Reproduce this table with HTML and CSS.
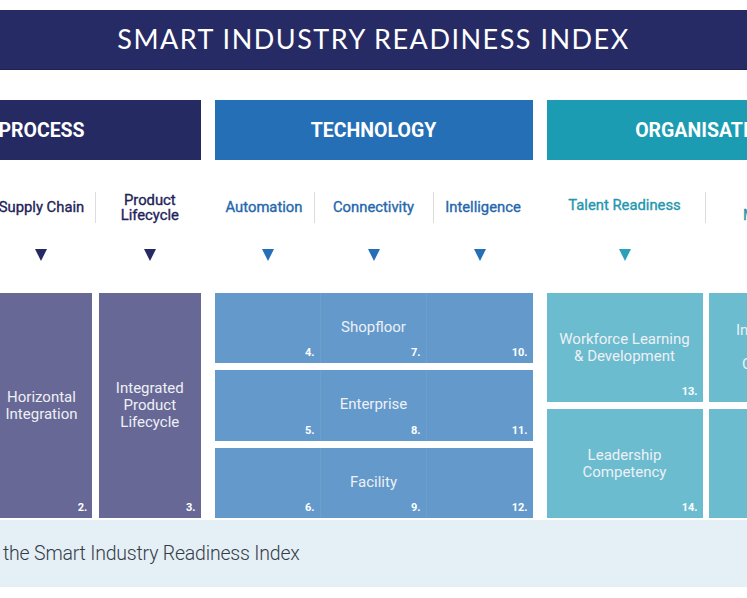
FILE: index.html
```html
<!DOCTYPE html>
<html lang="en">
<head>
<meta charset="utf-8">
<title>Smart Industry Readiness Index</title>
<link rel="stylesheet" href="styles.css">
</head>
<body>
<div class="stage">
  <div class="figure">
    <div class="title">SMART INDUSTRY READINESS INDEX</div>
    <div class="columns">
      <!-- PROCESS -->
      <section class="col process">
        <div class="head">PROCESS</div>
        <div class="labels labels-3">
          <div class="lab">Operations</div><div class="sep"></div>
          <div class="lab">Supply Chain</div><div class="sep"></div>
          <div class="lab">Product<br>Lifecycle</div>
        </div>
        <div class="arrows arrows-3"><span class="tri"></span><span class="tri"></span><span class="tri"></span></div>
        <div class="pboxes">
          <div class="box"><span class="txt">Vertical<br>Integration</span><span class="num">1.</span></div>
          <div class="box"><span class="txt">Horizontal<br>Integration</span><span class="num">2.</span></div>
          <div class="box"><span class="txt">Integrated<br>Product<br>Lifecycle</span><span class="num">3.</span></div>
        </div>
      </section>
      <!-- TECHNOLOGY -->
      <section class="col tech">
        <div class="head">TECHNOLOGY</div>
        <div class="labels labels-tech">
          <div class="lab">Automation</div><div class="sep"></div>
          <div class="lab">Connectivity</div><div class="sep"></div>
          <div class="lab">Intelligence</div>
        </div>
        <div class="arrows arrows-tech"><span class="tri"></span><span class="tri"></span><span class="tri"></span></div>
        <div class="trows">
          <div class="trow">
            <div class="cell c1"><span class="num">4.</span></div>
            <div class="cell c2"><span class="num">7.</span></div>
            <div class="cell c3"><span class="num">10.</span></div>
            <span class="rtxt">Shopfloor</span>
          </div>
          <div class="trow">
            <div class="cell c1"><span class="num">5.</span></div>
            <div class="cell c2"><span class="num">8.</span></div>
            <div class="cell c3"><span class="num">11.</span></div>
            <span class="rtxt">Enterprise</span>
          </div>
          <div class="trow">
            <div class="cell c1"><span class="num">6.</span></div>
            <div class="cell c2"><span class="num">9.</span></div>
            <div class="cell c3"><span class="num">12.</span></div>
            <span class="rtxt">Facility</span>
          </div>
        </div>
      </section>
      <!-- ORGANISATION -->
      <section class="col org">
        <div class="head">ORGANISATION</div>
        <div class="labels labels-2">
          <div class="lab lab-up">Talent Readiness</div><div class="sep"></div>
          <div class="lab">Structure &amp;<br>Management</div>
        </div>
        <div class="arrows arrows-2"><span class="tri"></span><span class="tri"></span></div>
        <div class="oboxes">
          <div class="box"><span class="txt">Workforce Learning<br>&amp; Development</span><span class="num">13.</span></div>
          <div class="box"><span class="txt">Inter- and Intra-<br>Company<br>Collaboration</span><span class="num">15.</span></div>
          <div class="box"><span class="txt">Leadership<br>Competency</span><span class="num">14.</span></div>
          <div class="box"><span class="txt">Strategy &amp;<br>Governance</span><span class="num">16.</span></div>
        </div>
      </section>
    </div>
  </div>
</div>
<div class="caption">the Smart Industry Readiness Index</div>
</body>
</html>
```
FILE: styles.css
```css
html, body {
  margin: 0;
  padding: 0;
  background: #ffffff;
}
body {
  width: 747px;
  height: 598px;
  overflow: hidden;
  font-family: Roboto, "Liberation Sans", sans-serif;
}
.stage {
  display: flex;
  justify-content: center;
  padding-top: 10px;
}
.figure {
  flex-shrink: 0;
  width: 982px;
}
.title {
  height: 60px;
  background: #272b65;
  color: #ffffff;
  display: flex;
  align-items: center;
  justify-content: center;
  padding-bottom: 3px;
  box-sizing: border-box;
  font-family: Lato, "Open Sans", sans-serif;
  font-size: 27px;
  letter-spacing: 1.5px;
  box-shadow: inset 0 -1px 0 #1d2150;
}
.columns {
  display: grid;
  grid-template-columns: repeat(3, 318px);
  column-gap: 14px;
  margin-top: 30px;
}
.col {
  display: flex;
  flex-direction: column;
}
.head {
  height: 60px;
  display: flex;
  align-items: center;
  justify-content: center;
  color: #ffffff;
  font-weight: 700;
  font-size: 19.5px;
}
.process .head { background: #262a63; }
.tech .head { background: #246fb5; }
.org .head { background: #1b9cb2; }

.labels {
  display: grid;
  height: 31px;
  margin-top: 32px;
  align-items: center;
  text-align: center;
  font-size: 14.8px;
  font-weight: 400;
  -webkit-text-stroke: 0.35px currentColor;
  line-height: 15px;
}
.labels-3 {
  grid-template-columns: 1fr 1px 1fr 1px 1fr;
  column-gap: 3px;
}
.labels-tech {
  grid-template-columns: 99px 1px 118px 1px 99px;
}
.labels-2 {
  grid-template-columns: 1fr 1px 1fr;
  column-gap: 2.5px;
}
.sep {
  align-self: stretch;
  background: #dcdcdc;
}
.lab-up { padding-bottom: 4px; }
.process .labels { color: #1e2459; }
.tech .labels { color: #2467ad; }
.org .labels { color: #2596ae; }

.arrows {
  display: grid;
  height: 12px;
  margin-top: 26px;
  justify-items: center;
}
.arrows-3 { grid-template-columns: repeat(3, 1fr); column-gap: 7px; }
.arrows-tech { grid-template-columns: repeat(3, 1fr); }
.arrows-2 { grid-template-columns: repeat(2, 1fr); column-gap: 6px; }
.tri {
  width: 0;
  height: 0;
  border-left: 6.5px solid transparent;
  border-right: 6.5px solid transparent;
  border-top: 12px solid currentColor;
}
.process .arrows { color: #262a63; }
.tech .arrows { color: #246fb5; }
.org .arrows { color: #2aa1b7; }

.pboxes, .trows, .oboxes {
  height: 225px;
  margin-top: 32px;
  display: grid;
}
.pboxes {
  grid-template-columns: repeat(3, 1fr);
  column-gap: 7px;
}
.oboxes {
  grid-template-columns: repeat(2, 1fr);
  grid-template-rows: repeat(2, 1fr);
  gap: 7px 6px;
}
.trows {
  grid-template-rows: repeat(3, 1fr);
  row-gap: 7px;
}
.box {
  display: grid;
  place-items: center;
  text-align: center;
  color: #eef0f6;
  font-size: 15px;
  line-height: 17px;
}
.box > * { grid-area: 1 / 1; }
.pboxes .box { background: #676895; }
.oboxes .box { background: #6bbccf; }
.num {
  justify-self: end;
  align-self: end;
  margin: 0 5px 4px 0;
  font-size: 11px;
  font-weight: 700;
  line-height: 12px;
  color: #ffffff;
}
.trow {
  display: grid;
  grid-template-columns: repeat(3, 1fr);
  grid-template-rows: 1fr;
  background: #6399cb;
  color: #eef0f6;
}
.rtxt {
  grid-column: 1 / 4;
  grid-row: 1;
  align-self: center;
  justify-self: center;
  font-size: 15px;
  margin-bottom: 2px;
}
.cell {
  grid-row: 1;
  display: flex;
  justify-content: flex-end;
  align-items: flex-end;
  border-right: 1px solid rgba(255, 255, 255, 0.07);
}
.c1 { grid-column: 1; }
.c2 { grid-column: 2; }
.c3 { grid-column: 3; border-right: 0; }
.cell .num { margin: 0 5px 4px 0; }

.caption {
  margin-top: 2px;
  height: 67px;
  background: #e4eff6;
  display: flex;
  align-items: center;
  padding-left: 3px;
  color: #363c47;
  font-family: Roboto, sans-serif;
  font-weight: 300;
  font-size: 19.5px;
  letter-spacing: -0.2px;
}
```
